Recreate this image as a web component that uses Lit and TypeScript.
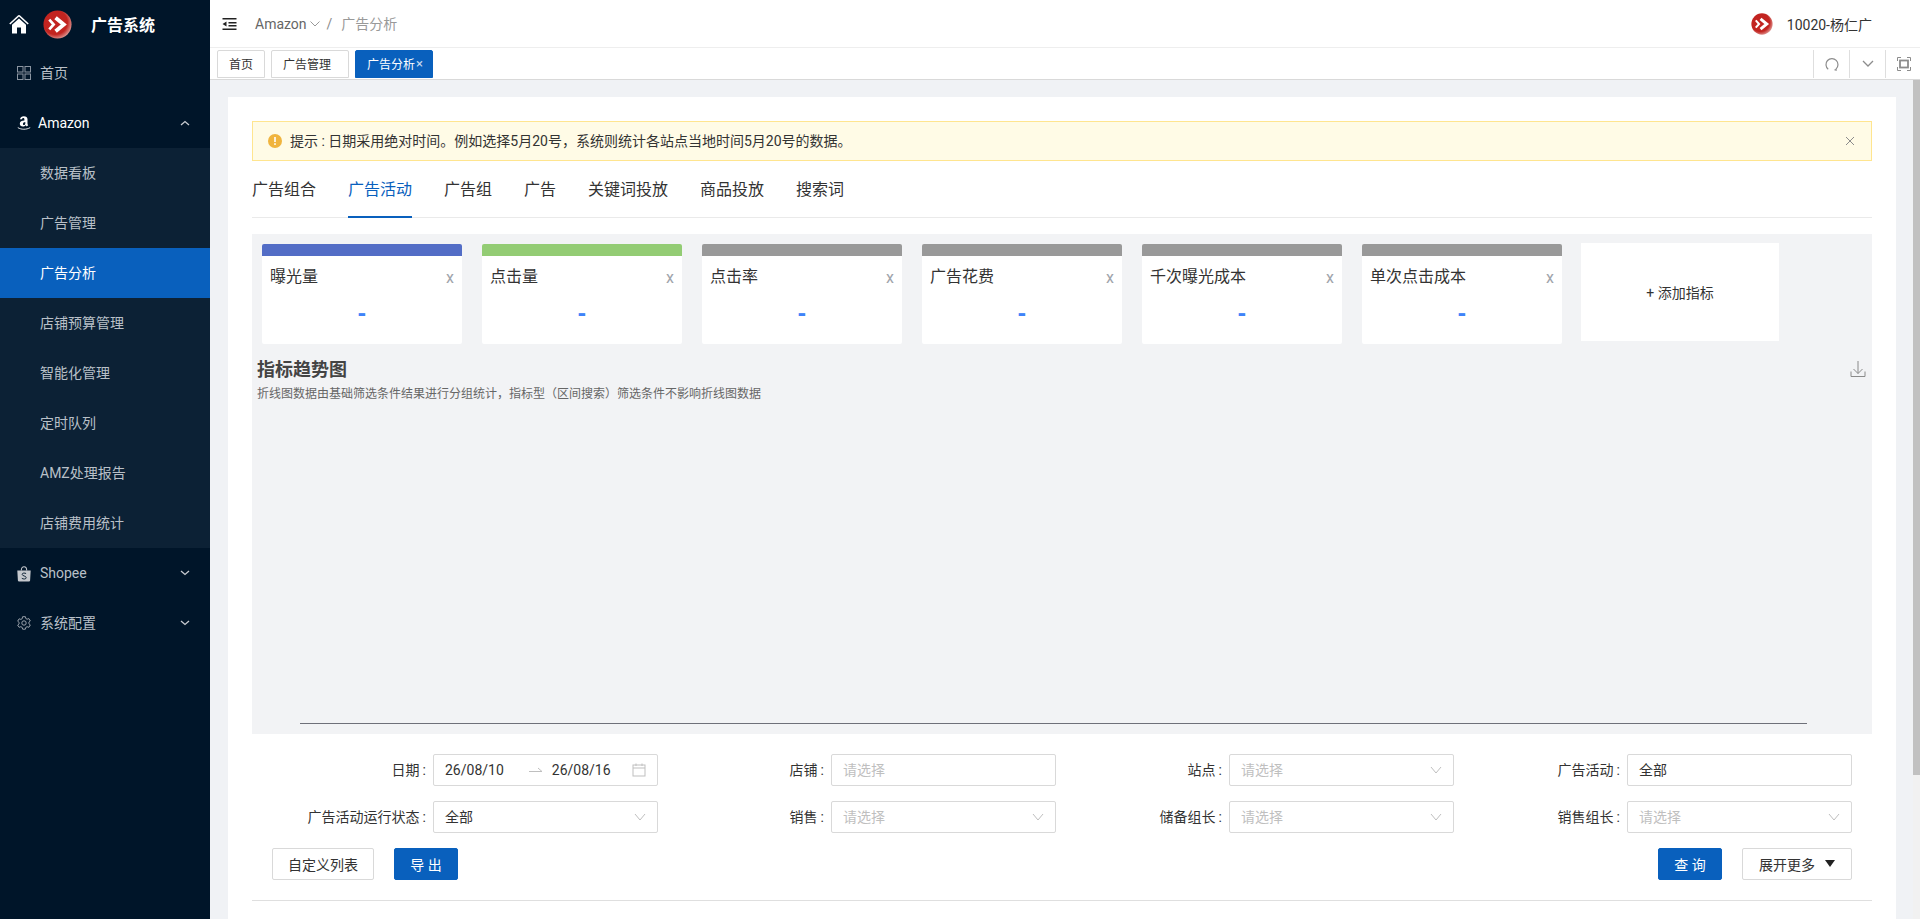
import { css, html, LitElement } from 'lit';
import { customElement } from 'lit/decorators.js';

const chevron = (up = false) => html`<svg class="menu-arrow" viewBox="0 0 10 6" width="10" height="6"><path d=${up ? 'M1 5l4-3.500L9 5' : 'M1 1l4 3.500L9 1'} fill="none" stroke="currentColor" stroke-width="1.300"/></svg>`;

const selectArrow = html`<svg class="arrow" viewBox="0 0 12 8" width="12" height="8"><path d="M1 1l5 6 5-6" fill="none" stroke="#bfbfbf" stroke-width="1"/></svg>`;

const logo = (size: number) => html`<svg viewBox="0 0 30 30" width=${size} height=${size}>
  <defs><radialGradient id="lg" cx="0.42" cy="0.42" r="0.62"><stop offset="0.7" stop-color="#c22420"/><stop offset="1" stop-color="#e09a96"/></radialGradient></defs>
  <circle cx="15" cy="15" r="14.500" fill="url(#lg)"/>
  <path d="M6.500 10l4.500 5-4.500 5" fill="none" stroke="#fff" stroke-width="2.800"/>
  <path d="M13 8l8.500 7-8.500 7" fill="none" stroke="#fff" stroke-width="4"/>
</svg>`;

const subItems = ['数据看板', '广告管理', '广告分析', '店铺预算管理', '智能化管理', '定时队列', 'AMZ处理报告', '店铺费用统计'];

const metrics = [
  { name: '曝光量', color: '#536dc6' },
  { name: '点击量', color: '#93cc74' },
  { name: '点击率', color: '#999999' },
  { name: '广告花费', color: '#999999' },
  { name: '千次曝光成本', color: '#999999' },
  { name: '单次点击成本', color: '#999999' },
];

const tabs = ['广告组合', '广告活动', '广告组', '广告', '关键词投放', '商品投放', '搜索词'];

const filters = [
  { label: '日期', kind: 'date' },
  { label: '店铺', value: '请选择', empty: true },
  { label: '站点', value: '请选择', empty: true, arrow: true },
  { label: '广告活动', value: '全部' },
  { label: '广告活动运行状态', value: '全部', arrow: true },
  { label: '销售', value: '请选择', empty: true, arrow: true },
  { label: '储备组长', value: '请选择', empty: true, arrow: true },
  { label: '销售组长', value: '请选择', empty: true, arrow: true },
];

@customElement('app-sider')
export class AppSider extends LitElement {
  static styles = css`
    :host {
      display: flex;
      flex-direction: column;
      flex: none;
      width: 210px;
      background: #001529;
      color: #b9c0c8;
      font-size: 14px;
    }
    .brand {
      display: flex;
      align-items: center;
      height: 48px;
      padding-left: 9px;
    }
    .brand .logo { display: flex; margin-left: 14px; margin-right: 19px; }
    .brand .name { color: #fff; font-size: 16px; font-weight: 700; }
    .item {
      display: flex;
      align-items: center;
      height: 50px;
      padding: 0 20px 0 17px;
    }
    .item .icon { flex: none; display: flex; width: 14px; height: 14px; margin-right: 9px; }
    .item .label { flex: 1; }
    .item .label.cjk { padding-bottom: 2px; }
    .item.open { color: #fff; }
    .item.open .icon { margin-right: 7px; }
    .menu-arrow { color: #c8ccd2; }
    .amz { position: relative; top: -1px; }
    .sub { background: #0c2135; }
    .sub .row {
      display: flex;
      align-items: center;
      box-sizing: border-box;
      height: 50px;
      padding: 0 0 2px 40px;
    }
    .sub .row.active { background: #0960bd; color: #fff; }
  `;

  render() {
    return html`
      <div class="brand">
        <svg viewBox="0 0 20 20" width="20" height="20"><path d="M10 1.500L0.800 10" fill="none" stroke="#fff" stroke-width="1.600"/><path d="M10 1.500L19.200 10" fill="none" stroke="#fff" stroke-width="1.600"/><path d="M10 4.500l7 6.300V19.500h-5v-6H8v6H3v-8.700z" fill="#fff"/></svg>
        <span class="logo">${logo(29)}</span>
        <span class="name">广告系统</span>
      </div>
      <div class="item">
        <span class="icon"><svg viewBox="0 0 14 14" width="14" height="14" fill="none" stroke="#8b95a1"><rect x="0.500" y="0.500" width="5.500" height="5.500"/><rect x="8" y="0.500" width="5.500" height="5.500"/><rect x="0.500" y="8" width="5.500" height="5.500"/><rect x="8" y="8" width="5.500" height="5.500"/></svg></span>
        <span class="label cjk">首页</span>
      </div>
      <div class="item open">
        <span class="icon amz"><svg viewBox="0 0 14 16" width="14" height="16"><path d="M3 4.200c.3-2 1.800-3 3.800-3 2.300 0 3.700 1 3.700 3v4.300c0 .8.200 1.200.7 1.700l-1.500 1.300c-.5-.4-.8-.8-1-1.200-.8.900-1.700 1.300-2.900 1.300-1.700 0-3-1-3-2.800 0-2.300 2-3.200 4.600-3.300V4.400c0-.8-.3-1.400-1.100-1.400-.7 0-1.100.5-1.300 1.300zM8.300 7.100c-1.300.1-2.300.6-2.300 1.800 0 .8.400 1.200 1 1.200.9 0 1.300-.8 1.300-1.900z" fill="#fff"/><path d="M0.800 12.600c3.500 2.200 8.500 2.200 12.400 0" fill="none" stroke="#fff" stroke-width="0.900"/></svg></span>
        <span class="label">Amazon</span>
        ${chevron(true)}
      </div>
      <div class="sub">
        ${subItems.map((s) => html`<div class="row ${s === '广告分析' ? 'active' : ''}">${s}</div>`)}
      </div>
      <div class="item">
        <span class="icon"><svg viewBox="0 0 14 16" width="14" height="16"><path d="M0.300 4.500h13.400l-.6 10a1.200 1.200 0 0 1-1.200 1.100H2.100a1.200 1.200 0 0 1-1.200-1.100z" fill="#c4c8cd"/><path d="M4.300 4.500c0-5 5.400-5 5.400 0" fill="none" stroke="#c4c8cd" stroke-width="1.100"/><path d="M9.100 7.600C8 6.800 5.200 6.700 5.200 8.400c0 1.800 4 1.300 4 3.300 0 1.700-3 1.600-4.400.6" fill="none" stroke="#001529" stroke-width="0.900"/></svg></span>
        <span class="label">Shopee</span>
        ${chevron()}
      </div>
      <div class="item">
        <span class="icon"><svg viewBox="0 0 14 14" width="14" height="14" fill="none" stroke="#a9b0b8" stroke-width="0.900"><path d="M5.600 0.700h2.800l.4 1.800 1.300.7 1.800-.6 1.400 2.400-1.400 1.200v1.500l1.400 1.200-1.400 2.400-1.800-.6-1.300.7-.4 1.800H5.600l-.4-1.800-1.300-.7-1.800.6L.7 9.100l1.400-1.200V6.400L.7 5.200l1.400-2.400 1.800.6 1.300-.7z"/><circle cx="7" cy="7" r="2.200"/></svg></span>
        <span class="label cjk">系统配置</span>
        ${chevron()}
      </div>
    `;
  }
}

@customElement('app-topbar')
export class AppTopbar extends LitElement {
  static styles = css`
    :host { display: block; flex: none; background: #fff; }
    .header {
      display: flex;
      align-items: center;
      box-sizing: border-box;
      height: 48px;
      padding: 0 48px 0 12px;
      border-bottom: 1px solid #eee;
      font-size: 14px;
    }
    .toggle { display: flex; margin-right: 18px; }
    .crumb { display: flex; align-items: center; gap: 3px; color: #666; }
    .sep { margin: 0 9px 0 7px; color: #8c8c8c; }
    .current { color: #999; padding-bottom: 2px; }
    .user { margin-left: auto; display: flex; align-items: center; gap: 14px; color: #333; }
    .user span { display: flex; }
    .tabs {
      display: flex;
      box-sizing: border-box;
      height: 32px;
      padding: 2px 0 1px 7px;
      gap: 6px;
      border-bottom: 1px solid #d9d9d9;
    }
    .tab {
      display: flex;
      align-items: center;
      box-sizing: border-box;
      height: 28px;
      padding: 0 11px 2px;
      border: 1px solid #d9d9d9;
      border-radius: 2px 2px 0 0;
      font-size: 12px;
      color: #333;
    }
    .tab.wide { width: 78px; }
    .tab.active { background: #0960bd; border-color: #0960bd; color: #fff; padding: 0 0 2px 11px; gap: 1px; }
    .tab.active i { font-style: normal; color: #c5d9ef; font-size: 13px; }
    .tools { margin-left: auto; display: flex; height: 28px; }
    .tools div {
      display: flex;
      align-items: center;
      justify-content: center;
      box-sizing: border-box;
      width: 36px;
      border-left: 1px solid #dedede;
    }
    .tools div:last-child { width: 35px; padding-left: 2px; }
  `;

  render() {
    return html`
      <div class="header">
        <span class="toggle"><svg viewBox="0 0 14 14" width="15" height="14"><path d="M0 1h14v1.600H0zM6 5h8v1.400H6zM6 8h8v1.400H6zM0 11.400h14V13H0zM4 4.500v5L0 7z" fill="#222"/></svg></span>
        <span class="crumb">Amazon <svg viewBox="0 0 10 6" width="10" height="6"><path d="M0.500 0.500L5 5l4.500-4.500" fill="none" stroke="#999"/></svg></span>
        <span class="sep">/</span>
        <span class="current">广告分析</span>
        <div class="user"><span>${logo(22)}</span>10020-杨仁广</div>
      </div>
      <div class="tabs">
        <div class="tab">首页</div>
        <div class="tab wide">广告管理</div>
        <div class="tab wide active">广告分析<i>×</i></div>
        <div class="tools">
          <div><svg viewBox="0 0 14 14" width="14" height="14"><path d="M3.200 12.200A6 6 0 1 1 11 12" fill="none" stroke="#8c8c8c" stroke-width="1.200"/><path d="M8.800 12.900l2.700-1.500.2 2.600z" fill="#8c8c8c"/></svg></div>
          <div><svg viewBox="0 0 12 8" width="12" height="8"><path d="M1 1l5 5 5-5" fill="none" stroke="#8c8c8c" stroke-width="1.300"/></svg></div>
          <div><svg viewBox="0 0 14 14" width="14" height="14" fill="none" stroke="#8c8c8c"><path d="M0.500 4V0.500H4M10 0.500h3.500V4M13.500 10v3.500H10M4 13.500H0.500V10"/><rect x="3" y="3.500" width="8" height="7" stroke-width="1.800"/></svg></div>
        </div>
      </div>
    `;
  }
}

@customElement('metric-card')
export class MetricCard extends LitElement {
  static properties = { name: {}, color: {} };
  name = '';
  color = '';

  static styles = css`
    :host {
      display: block;
      box-sizing: border-box;
      width: 200px;
      height: 100px;
      background: #fff;
      border-radius: 2px;
      overflow: hidden;
    }
    .bar { height: 12px; }
    .head {
      display: flex;
      justify-content: space-between;
      align-items: flex-start;
      padding: 10px 8px 0 8px;
      font-size: 16px;
      line-height: 22px;
      color: #333;
    }
    .close { color: #a0a4ab; font-size: 16px; line-height: 24px; }
    .value {
      margin-top: 13px;
      text-align: center;
      color: #3f83f8;
      font-size: 22px;
      font-weight: 900;
      line-height: 22px;
    }
  `;

  render() {
    return html`
      <div class="bar" style="background:${this.color}"></div>
      <div class="head"><span>${this.name}</span><span class="close">x</span></div>
      <div class="value">-</div>
    `;
  }
}

@customElement('app-root')
export class AppRoot extends LitElement {
  static styles = css`
    :host {
      display: flex;
      height: 919px;
      overflow: hidden;
      background: #f0f2f5;
      font-family: Roboto, "Noto Sans CJK SC", sans-serif;
      color: #333;
    }
    .main { flex: 1; min-width: 0; display: flex; flex-direction: column; }
    .body { flex: 1; min-height: 0; display: flex; }
    .scroll { flex: 1; min-width: 0; overflow: hidden; padding: 17px 17px 0 18px; }
    .scrollbar { flex: none; width: 7px; background: #f1f1f1; }
    .scrollbar div { height: 695px; background: #c1c1c1; }
    .page { background: #fff; padding: 24px 24px 0; height: 900px; box-sizing: border-box; }
    .alert {
      display: flex;
      align-items: center;
      box-sizing: border-box;
      height: 40px;
      padding: 0 16px 0 15px;
      background: #fffbe6;
      border: 1px solid #ffe58f;
      font-size: 14px;
      color: #333;
    }
    .alert > svg { flex: none; margin-right: 8px; }
    .alert .msg { padding-bottom: 2px; }
    .alert .x { margin-left: auto; display: flex; }
    .tabbar {
      display: flex;
      gap: 32px;
      height: 57px;
      border-bottom: 1px solid #eaeaea;
      box-sizing: border-box;
      font-size: 16px;
    }
    .tabbar div {
      box-sizing: border-box;
      height: 57px;
      padding-top: 16px;
      line-height: 26px;
    }
    .tabbar .active { color: #0960bd; border-bottom: 2px solid #0960bd; }
    .panel {
      margin-top: 16px;
      height: 500px;
      background: #f2f3f5;
      display: flex;
      flex-direction: column;
    }
    .cards { display: flex; gap: 20px; padding: 10px 10px 0; }
    .add {
      width: 198px;
      height: 98px;
      margin-left: -1px;
      margin-top: -1px;
      display: flex;
      align-items: center;
      justify-content: center;
      background: #fff;
      font-size: 14px;
    }
    .trend { position: relative; padding: 14px 5px 0; }
    .trend h3 { margin: 0; font-size: 18px; line-height: 24px; color: #444; }
    .trend p { margin: 3px 0 0; font-size: 12px; line-height: 18px; color: #666; }
    .trend svg { position: absolute; right: 6px; top: 17px; }
    .chart { flex: 1; display: flex; align-items: flex-end; padding: 0 65px 10px 48px; }
    .chart div { flex: 1; height: 1px; background: #6e7079; }
    .form {
      display: grid;
      grid-template-columns: repeat(4, 398px);
      row-gap: 15px;
      margin-top: 20px;
      margin-left: 8px;
    }
    .field { display: flex; align-items: center; justify-content: flex-end; font-size: 14px; gap: 7px; }
    .field .name { padding-bottom: 2px; }
    .field .name i { font-style: normal; margin-left: 3px; }
    .control {
      box-sizing: border-box;
      position: relative;
      display: flex;
      align-items: center;
      width: 225px;
      height: 32px;
      padding: 0 11px;
      background: #fff;
      border: 1px solid #d9d9d9;
      border-radius: 2px;
      font-size: 14px;
    }
    .control.text { padding-bottom: 2px; }
    .control.empty { color: #bfbfbf; }
    .arrow { position: absolute; right: 11px; top: 11px; }
    .control .to { margin: 0 9px 0 25px; color: #bfbfbf; display: flex; }
    .control .cal { position: absolute; right: 11px; top: 8px; }
    .actions { display: flex; align-items: center; gap: 20px; margin: 15px 20px 0; }
    .btn {
      box-sizing: border-box;
      display: flex;
      align-items: center;
      justify-content: center;
      height: 32px;
      padding-bottom: 1px;
      border: 1px solid #d9d9d9;
      border-radius: 2px;
      background: #fff;
      font-size: 14px;
    }
    .btn.primary { width: 64px; background: #0960bd; border-color: #0960bd; color: #fff; }
    .btn.custom { width: 102px; }
    .btn.more { width: 110px; gap: 10px; }
    .spacer { flex: 1; }
    .rule { margin-top: 20px; height: 1px; background: #dfdfdf; }
  `;

  render() {
    return html`
      <app-sider></app-sider>
      <div class="main">
        <app-topbar></app-topbar>
        <div class="body">
          <div class="scroll">
            <div class="page">
              <div class="alert">
                <svg viewBox="0 0 14 14" width="14" height="14"><circle cx="7" cy="7" r="7" fill="#f0b43e"/><rect x="6.200" y="3" width="1.600" height="5" fill="#fff"/><rect x="6.200" y="9.200" width="1.600" height="1.700" fill="#fff"/></svg>
                <span class="msg">提示 : 日期采用绝对时间。例如选择5月20号，系统则统计各站点当地时间5月20号的数据。</span>
                <span class="x"><svg viewBox="0 0 10 10" width="10" height="10"><path d="M1 1l8 8M9 1l-8 8" stroke="#8c8c8c" fill="none"/></svg></span>
              </div>
              <div class="tabbar">
                ${tabs.map((t) => html`<div class=${t === '广告活动' ? 'active' : ''}>${t}</div>`)}
              </div>
              <div class="panel">
                <div class="cards">
                  ${metrics.map((m) => html`<metric-card .name=${m.name} .color=${m.color}></metric-card>`)}
                  <div class="add">+ 添加指标</div>
                </div>
                <div class="trend">
                  <h3>指标趋势图</h3>
                  <p>折线图数据由基础筛选条件结果进行分组统计，指标型（区间搜索）筛选条件不影响折线图数据</p>
                  <svg viewBox="0 0 16 16" width="16" height="16" fill="none" stroke="#8a8a8a"><path d="M8 0v12.500M3.500 8l4.500 4.500L12.500 8M1 10.500v5h14v-5"/></svg>
                </div>
                <div class="chart"><div></div></div>
              </div>
              <div class="form">
                ${filters.map((f) => html`
                  <div class="field">
                    <span class="name">${f.label}<i>:</i></span>
                    ${f.kind === 'date'
                      ? html`<div class="control">26/08/10<span class="to"><svg viewBox="0 0 14 8" width="14" height="8"><path d="M0 5.500h13l-4-3.500" fill="none" stroke="#bfbfbf"/></svg></span>26/08/16<svg class="cal" viewBox="0 0 14 14" width="14" height="14" fill="none" stroke="#bfbfbf"><rect x="1" y="2" width="12" height="11"/><path d="M1 5h12M4 0.500v2.500M10 0.500v2.500"/></svg></div>`
                      : html`<div class="control text ${f.empty ? 'empty' : ''}">${f.value}${f.arrow ? selectArrow : ''}</div>`}
                  </div>
                `)}
              </div>
              <div class="actions">
                <div class="btn custom">自定义列表</div>
                <div class="btn primary">导 出</div>
                <div class="spacer"></div>
                <div class="btn primary">查 询</div>
                <div class="btn more">展开更多 <svg viewBox="0 0 10 7" width="10" height="7"><path d="M0 0h10L5 7z" fill="#222"/></svg></div>
              </div>
              <div class="rule"></div>
            </div>
          </div>
          <div class="scrollbar"><div></div></div>
        </div>
      </div>
    `;
  }
}
